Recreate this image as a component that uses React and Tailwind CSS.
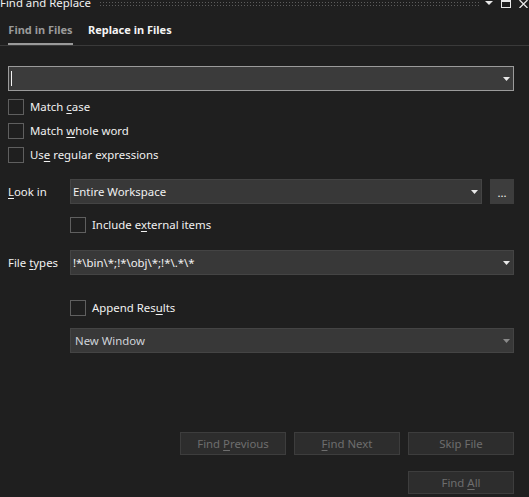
import React from "react";

const Arrow = ({ dim }) => (
  <svg width="7" height="4" viewBox="0 0 7 4" className="shrink-0">
    <path d="M0 0H7L3.5 4Z" fill={dim ? "#8a8a8a" : "#e8e8e8"} />
  </svg>
);

const U = ({ children }) => <span className="underline underline-offset-2">{children}</span>;

const Check = ({ children, className = "" }) => (
  <div className={`flex items-center h-[16px] gap-[6px] ${className}`}>
    <div className="w-[16px] h-[16px] border border-[#5f5f5f] shrink-0" />
    <span className="text-[#f1f1f1] leading-[16px] whitespace-nowrap">{children}</span>
  </div>
);

const Select = ({ children, className = "", dim }) => (
  <div
    className={`h-[25px] flex items-center justify-between bg-[#383838] border border-[#444444] pl-[2px] pr-[3px] ${className}`}
  >
    <span className={dim ? "text-[#cfd3d8]" : "text-[#f1f1f1]"}>{children}</span>
    <Arrow dim={dim} />
  </div>
);

const Btn = ({ children }) => (
  <div className="w-[106px] h-[23px] bg-[#2d2d2d] border border-[#3d3d3d] flex items-center justify-center text-[#6e6e6e]">
    <span className="whitespace-nowrap">{children}</span>
  </div>
);

export default function App() {
  return (
    <div
      className="w-[529px] h-[497px] bg-[#1f1f1f] overflow-hidden text-[11.4px] text-[#f1f1f1]"
      style={{ fontFamily: '"Noto Sans", sans-serif' }}
    >
      {/* title bar */}
      <div className="h-[12px] flex items-start overflow-hidden">
        <span className="text-[11.4px] leading-[16px] mt-[-5px] text-[#f1f1f1] whitespace-nowrap">Find and Replace</span>
        <div className="ml-[8px] mt-[1px] w-[380px] h-[6px] bg-[radial-gradient(circle,#5c5c5c_0.7px,transparent_0.8px)] bg-[length:3px_3px]" />
        <div className="ml-auto flex items-start gap-[8px] pr-[1px]">
          <svg width="8" height="5" viewBox="0 0 8 5" className="mt-[1px]">
            <path d="M0 0H8L4 4Z" fill="#e8e8e8" />
          </svg>
          <svg width="10" height="8" viewBox="0 0 10 8">
            <rect x="0.5" y="0.5" width="9" height="7" fill="none" stroke="#e8e8e8" />
            <rect x="0" y="0" width="10" height="2" fill="#e8e8e8" />
          </svg>
          <svg width="9" height="8" viewBox="0 0 9 8">
            <path d="M0.5 0L8.5 8M8.5 0L0.5 8" stroke="#e8e8e8" strokeWidth="1.3" />
          </svg>
        </div>
      </div>

      {/* tabs */}
      <div className="h-[34px] border-b border-[#3a3a3a] flex items-end pl-[8px] font-bold text-[11px]">
        <div className="w-[65px] text-center text-[#9a9a9a] pb-[5px] border-b-2 border-[#9a9a9a] leading-[16px] whitespace-nowrap">
          Find in Files
        </div>
        <div className="ml-[15px] text-[#f4f4f4] pb-[7px] leading-[16px] whitespace-nowrap">Replace in Files</div>
      </div>

      <div className="pl-[8px] pr-[15px] pt-[20px]">
        {/* search box */}
        <div className="h-[25px] bg-[#3b3b3b] border border-[#9b9b9b] flex items-center justify-between pl-[2px] pr-[3px]">
          <div className="w-[1px] h-[15px] bg-[#f1f1f1]" />
          <Arrow />
        </div>

        <div className="flex flex-col gap-[8px] mt-[8px]">
          <Check>Match <U>c</U>ase</Check>
          <Check>Match <U>w</U>hole word</Check>
          <Check>Us<U>e</U> regular expressions</Check>
        </div>

        {/* look in */}
        <div className="flex items-center mt-[16px] h-[25px]">
          <span className="w-[62px] shrink-0"><U>L</U>ook in</span>
          <Select className="flex-1">Entire Workspace</Select>
          <div className="ml-[8px] w-[24px] h-[25px] bg-[#3d3d3d] flex items-end justify-center pb-[6px] leading-[10px] text-[#f1f1f1]">
            ...
          </div>
        </div>

        <Check className="ml-[62px] mt-[13px]">Include e<U>x</U>ternal items</Check>

        <div className="flex items-center mt-[17px] h-[25px]">
          <span className="w-[62px] shrink-0">File <U>t</U>ypes</span>
          <Select className="flex-1">!*\bin\*;!*\obj\*;!*\.*\*</Select>
        </div>

        <Check className="ml-[62px] mt-[25px]">Append Res<U>u</U>lts</Check>

        <Select className="ml-[62px] mt-[12px] pl-[4px]" dim>New Window</Select>

        {/* buttons */}
        <div className="flex justify-end gap-[8px] mt-[79px]">
          <Btn>Find <U>P</U>revious</Btn>
          <Btn><U>F</U>ind Next</Btn>
          <Btn>Skip File</Btn>
        </div>
        <div className="flex justify-end mt-[16px]">
          <Btn>Find <U>A</U>ll</Btn>
        </div>
      </div>
    </div>
  );
}
